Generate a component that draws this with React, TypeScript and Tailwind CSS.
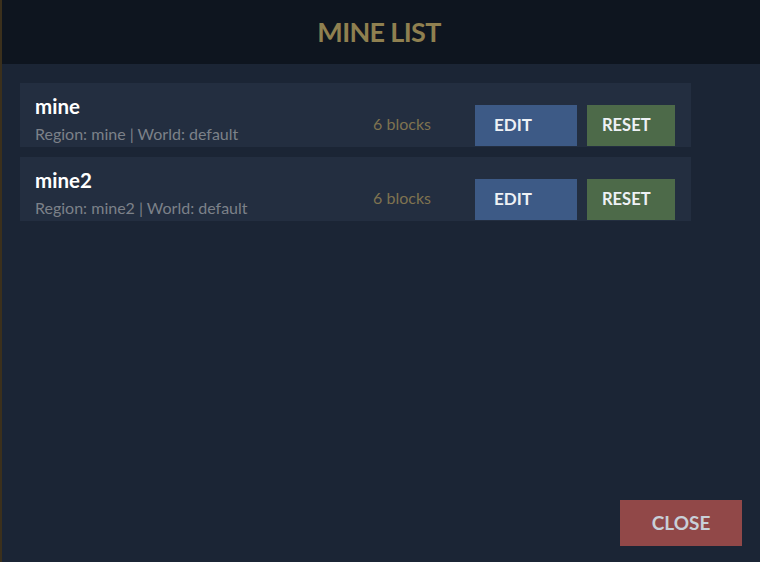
const mines = [
  { name: "mine", region: "mine", world: "default", blocks: 6 },
  { name: "mine2", region: "mine2", world: "default", blocks: 6 },
];

export default function App() {
  return (
    <div
      className="flex h-[562px] w-[760px] flex-col border-l-2 border-[#3b301c] bg-[#1b2535]"
      style={{ fontFamily: "Lato, 'Open Sans', sans-serif" }}
    >
      <div className="flex h-16 items-center justify-center bg-[#0e151f]">
        <h1 className="pr-[4px] text-[27px] font-bold tracking-tight text-[#8f8050]">MINE LIST</h1>
      </div>

      <div className="flex flex-1 flex-col gap-[10px] pl-[18px] pt-[19px]">
        {mines.map((m) => (
          <div key={m.name} className="flex h-16 w-[671px] bg-[#232e40] pl-[15px] pr-4">
            <div className="flex flex-1 flex-col pt-[11px]">
              <span className="text-[20.5px] font-bold leading-[24px] text-white">{m.name}</span>
              <span className="mt-[6px] text-[16px] leading-[19px] text-[#7c8189]">
                Region: {m.region} | World: {m.world}
              </span>
            </div>
            <div className="flex items-start pt-[22px]">
              <span className="mr-[44px] mt-[7px] text-[16px] text-[#7f7350]">
                {m.blocks} blocks
              </span>
              <button className="h-[41px] w-[102px] bg-[#3d5a86] pb-[1px] pl-[19px] text-left text-[17px] font-bold text-[#eef1f5]">
                EDIT
              </button>
              <button className="ml-[10px] h-[41px] w-[88px] bg-[#4d6a49] pl-[15px] text-left text-[16.5px] font-bold text-[#eef1f5]">
                RESET
              </button>
            </div>
          </div>
        ))}
      </div>

      <div className="flex justify-end pb-4 pr-[18px]">
        <button className="h-[46px] w-[122px] bg-[#914848] text-[19px] font-bold text-[#c8d0d8]">
          CLOSE
        </button>
      </div>
    </div>
  );
}
